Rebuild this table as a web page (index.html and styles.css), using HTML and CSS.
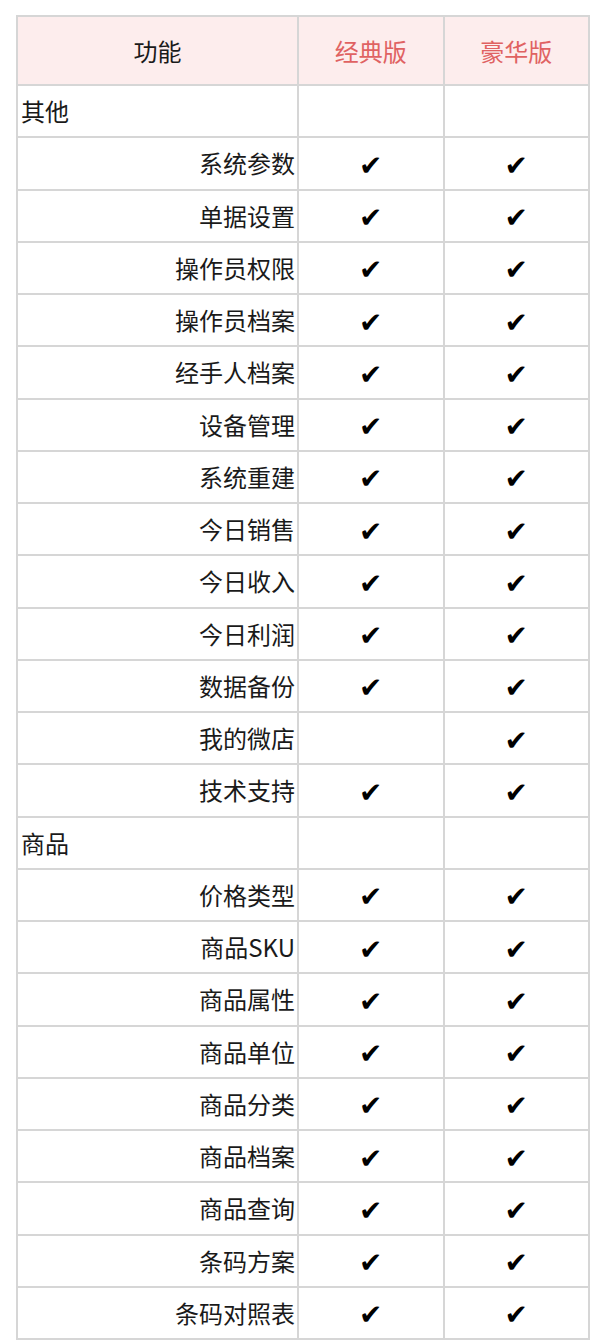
FILE: index.html
```html
<!DOCTYPE html>
<html lang="zh-CN">
<head>
    <meta charset="UTF-8">
    <meta name="viewport" content="width=device-width, initial-scale=1.0">
    <title>功能对比</title>
    <link rel="stylesheet" href="styles.css">
</head>
<body>
    <table class="compare">
        <thead>
            <tr>
                <th class="feature">功能</th>
                <th class="plan">经典版</th>
                <th class="plan">豪华版</th>
            </tr>
        </thead>
        <tbody>
            <tr class="group"><td>其他</td><td></td><td></td></tr>
            <tr><td class="name">系统参数</td><td class="mark">✔</td><td class="mark">✔</td></tr>
            <tr><td class="name">单据设置</td><td class="mark">✔</td><td class="mark">✔</td></tr>
            <tr><td class="name">操作员权限</td><td class="mark">✔</td><td class="mark">✔</td></tr>
            <tr><td class="name">操作员档案</td><td class="mark">✔</td><td class="mark">✔</td></tr>
            <tr><td class="name">经手人档案</td><td class="mark">✔</td><td class="mark">✔</td></tr>
            <tr><td class="name">设备管理</td><td class="mark">✔</td><td class="mark">✔</td></tr>
            <tr><td class="name">系统重建</td><td class="mark">✔</td><td class="mark">✔</td></tr>
            <tr><td class="name">今日销售</td><td class="mark">✔</td><td class="mark">✔</td></tr>
            <tr><td class="name">今日收入</td><td class="mark">✔</td><td class="mark">✔</td></tr>
            <tr><td class="name">今日利润</td><td class="mark">✔</td><td class="mark">✔</td></tr>
            <tr><td class="name">数据备份</td><td class="mark">✔</td><td class="mark">✔</td></tr>
            <tr><td class="name">我的微店</td><td class="mark"></td><td class="mark">✔</td></tr>
            <tr><td class="name">技术支持</td><td class="mark">✔</td><td class="mark">✔</td></tr>
            <tr class="group"><td>商品</td><td></td><td></td></tr>
            <tr><td class="name">价格类型</td><td class="mark">✔</td><td class="mark">✔</td></tr>
            <tr><td class="name">商品SKU</td><td class="mark">✔</td><td class="mark">✔</td></tr>
            <tr><td class="name">商品属性</td><td class="mark">✔</td><td class="mark">✔</td></tr>
            <tr><td class="name">商品单位</td><td class="mark">✔</td><td class="mark">✔</td></tr>
            <tr><td class="name">商品分类</td><td class="mark">✔</td><td class="mark">✔</td></tr>
            <tr><td class="name">商品档案</td><td class="mark">✔</td><td class="mark">✔</td></tr>
            <tr><td class="name">商品查询</td><td class="mark">✔</td><td class="mark">✔</td></tr>
            <tr><td class="name">条码方案</td><td class="mark">✔</td><td class="mark">✔</td></tr>
            <tr><td class="name">条码对照表</td><td class="mark">✔</td><td class="mark">✔</td></tr>
        </tbody>
    </table>
</body>
</html>
```

FILE: styles.css
```css
body {
    margin: 0;
    padding: 15px 18px 0 16px;
    font-family: "Noto Sans CJK SC", "Noto Sans", sans-serif;
    color: #1a1a1a;
}
.compare {
    width: 574px;
    border-collapse: collapse;
    table-layout: fixed;
}
.compare th,
.compare td {
    border: 2px solid #d6d6d6;
    font-size: 24px;
    font-weight: normal;
    line-height: 30px;
    padding: 0 4px;
}
.compare th {
    height: 67px;
    background: #fdeded;
    text-align: center;
}
.compare th.feature { width: 271px; }
.compare th.plan {
    color: #e06262;
}
.compare td {
    height: 50.25px;
}
.compare td.name {
    text-align: right;
    padding-right: 2px;
}
.compare .group td:first-child {
    text-align: left;
    padding-left: 3px;
}
.compare td.mark {
    text-align: center;
    font-family: "DejaVu Sans", sans-serif;
    font-style: italic;
    font-size: 28px;
    color: #000;
    padding-top: 5px;
    height: 45.25px;
}
```
